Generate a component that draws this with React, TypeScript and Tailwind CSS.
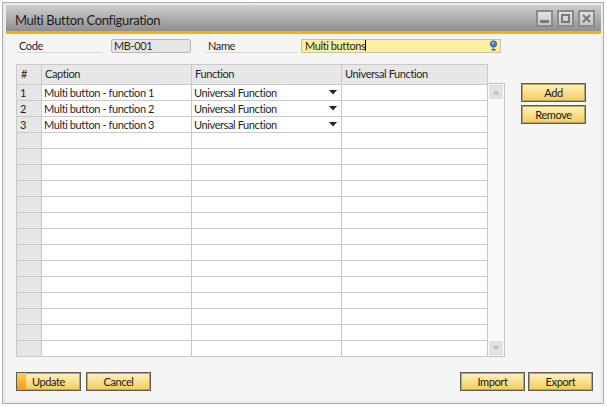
import React from "react";

const data = [
  ["1", "Multi button - function 1", "Universal Function"],
  ["2", "Multi button - function 2", "Universal Function"],
  ["3", "Multi button - function 3", "Universal Function"],
];

function Btn({ label, accent }: { label: string; accent?: boolean }) {
  return (
    <div className="relative w-[65px] h-[19px] border border-[#5c5c5c] bg-gradient-to-b from-[#fdf1bd] to-[#f3cd55] flex items-center justify-center shadow-[inset_0_0_0_1px_#b8a565]">
      {accent && (
        <div className="absolute left-0 top-0 bottom-0 w-[9px] bg-gradient-to-b from-[#fdd04a] to-[#f39a1a]" />
      )}
      <span className="relative text-[11px] leading-none text-[#1a1a1a]">{label}</span>
    </div>
  );
}

function Arrow() {
  return (
    <svg width="8" height="5" viewBox="0 0 8 5" className="block">
      <path d="M0 0 H8 L4 4.5 Z" fill="#222" />
    </svg>
  );
}

function Globe() {
  return (
    <svg width="9" height="11" viewBox="0 0 9 11" className="block">
      <circle cx="4.5" cy="4" r="3.2" fill="#3f7cc4" stroke="#2a5a99" strokeWidth="0.6" />
      <path d="M3 2.6 C3.8 2 5 2.2 5.6 3 C5 3.8 4 3.4 3.4 4.2 Z" fill="#bfe0ff" />
      <path d="M1.2 4.8 A3.6 3.6 0 0 0 7.8 4.8" fill="none" stroke="#5a6f88" strokeWidth="0.8" />
      <rect x="4" y="7.6" width="1" height="1.6" fill="#5a6f88" />
      <rect x="2.3" y="9.2" width="4.4" height="1.2" fill="#2a4f80" />
    </svg>
  );
}

export default function App() {
  const rows = Array.from({ length: 17 }, (_, i) => data[i] ?? null);
  return (
    <div className="w-[607px] h-[407px] bg-white font-['Lato',sans-serif] text-[11px] tracking-[-0.4px] text-[#1f1f1f] overflow-hidden">
      <div className="ml-[2px] mt-[2px] w-[602px] h-[402px] border border-[#acacac] bg-[#ebebeb] pt-[2px] pl-[3px] pr-[2px] pb-[2px] flex flex-col">
        {/* Title bar */}
        <div className="h-[26px] flex-none bg-gradient-to-b from-[#d0d0d0] to-[#8f8f8f] flex items-start">
          <div className="pl-[9px] pt-[7px] text-[13px] leading-[16px] tracking-[-0.35px] text-[#1c1c1c]">Multi Button Configuration</div>
          <div className="ml-auto mr-[6px] mt-[5px] flex gap-[4px]">
            <div className="w-[17px] h-[17px] border-[2px] border-[#8a8a8a] bg-gradient-to-b from-[#e2e2e2] to-[#c4c4c4] flex items-end justify-center pb-[2px]">
              <div className="w-[9px] h-[3px] bg-[#7a7a7a]" />
            </div>
            <div className="w-[17px] h-[17px] border-[2px] border-[#8a8a8a] bg-gradient-to-b from-[#e2e2e2] to-[#c4c4c4] flex items-center justify-center">
              <div className="w-[9px] h-[9px] border-[2px] border-[#7a7a7a]" />
            </div>
            <div className="w-[17px] h-[17px] border-[2px] border-[#8a8a8a] bg-gradient-to-b from-[#e2e2e2] to-[#c4c4c4] flex items-center justify-center">
              <svg width="9" height="9" viewBox="0 0 9 9" className="block">
                <path d="M1 1 L8 8 M8 1 L1 8" stroke="#757575" strokeWidth="2" />
              </svg>
            </div>
          </div>
        </div>
        <div className="h-[3px] flex-none bg-[#f7b200]" />

        {/* Content */}
        <div className="flex-1 bg-[#f5f5f5] pl-[10px] pr-[8px] pt-[5px] pb-[10px] flex flex-col">
          {/* Form row */}
          <div className="flex items-start h-[14px]">
            <div className="w-[87px] h-[14px] border-b border-[#d9d9d9] pl-[3px] leading-[14px]">Code</div>
            <div className="ml-[8px] w-[80px] h-[14px] bg-[#e6e6e6] border border-[#b9b9b9] rounded-[2px] pl-[2px] leading-[12px]">MB-001</div>
            <div className="ml-[14px] w-[93px] h-[14px] border-b border-[#d9d9d9] pl-[3px] leading-[14px]">Name</div>
            <div className="ml-[3px] w-[200px] h-[14px] bg-[#fdeea1] border border-[#c9c39a] pl-[3px] leading-[12px] flex items-start">
              <span>Multi buttons</span>
              <span className="w-px h-[11px] bg-black" />
              <span className="ml-auto mr-[2px]"><Globe /></span>
            </div>
          </div>

          {/* Grid + side buttons */}
          <div className="mt-[11px] flex items-start">
            <div className="w-[472px] border-l border-t border-[#c9c9c9] bg-white">
              <div className="flex h-[20px] bg-[#e7e7e7]">
                <div className="w-[25px] border-r border-b border-[#c9c9c9] pl-[4px] leading-[18px]">#</div>
                <div className="w-[150px] border-r border-b border-[#c9c9c9] pl-[3px] leading-[18px]">Caption</div>
                <div className="w-[150px] border-r border-b border-[#c9c9c9] pl-[3px] leading-[18px]">Function</div>
                <div className="w-[146px] border-r border-b border-[#c9c9c9] pl-[3px] leading-[18px]">Universal Function</div>
              </div>
              {rows.map((r, i) => (
                <div key={i} className="flex h-[16px]">
                  <div className="w-[25px] bg-[#e6e6e6] border-r border-b border-[#c9c9c9] pl-[3px] leading-[15px]">{r ? r[0] : ""}</div>
                  <div className="w-[150px] border-r border-b border-[#c9c9c9] pl-[2px] leading-[15px]">{r ? r[1] : ""}</div>
                  <div className="w-[150px] border-r border-b border-[#c9c9c9] pl-[2px] pr-[4px] leading-[15px] flex items-start">
                    {r && (
                      <>
                        <span>{r[2]}</span>
                        <span className="ml-auto mt-[5px]"><Arrow /></span>
                      </>
                    )}
                  </div>
                  <div className="w-[146px] border-r border-b border-[#c9c9c9]" />
                </div>
              ))}
            </div>
            {/* Scrollbar */}
            <div className="mt-[19px] w-[17px] h-[274px] border-t border-r border-b border-[#c4c4c4] bg-[#f9f9f9] flex flex-col justify-between p-[1px]">
              <div className="w-[14px] h-[14px] bg-[#e3e3e3] flex items-center justify-center">
                <svg width="8" height="5" viewBox="0 0 8 5" className="block"><path d="M0 4.5 H8 L4 0 Z" fill="#c2c2c2" /></svg>
              </div>
              <div className="w-[14px] h-[14px] bg-[#e3e3e3] flex items-center justify-center">
                <svg width="8" height="5" viewBox="0 0 8 5" className="block"><path d="M0 0 H8 L4 4.5 Z" fill="#c2c2c2" /></svg>
              </div>
            </div>
            <div className="ml-[16px] mt-[19px] flex flex-col gap-[3px]">
              <Btn label="Add" />
              <Btn label="Remove" />
            </div>
          </div>

          {/* Bottom buttons */}
          <div className="mt-auto flex items-center">
            <Btn label="Update" accent />
            <div className="ml-[5px]"><Btn label="Cancel" /></div>
            <div className="ml-auto"><Btn label="Import" /></div>
            <div className="ml-[3px]"><Btn label="Export" /></div>
          </div>
        </div>
      </div>
    </div>
  );
}
